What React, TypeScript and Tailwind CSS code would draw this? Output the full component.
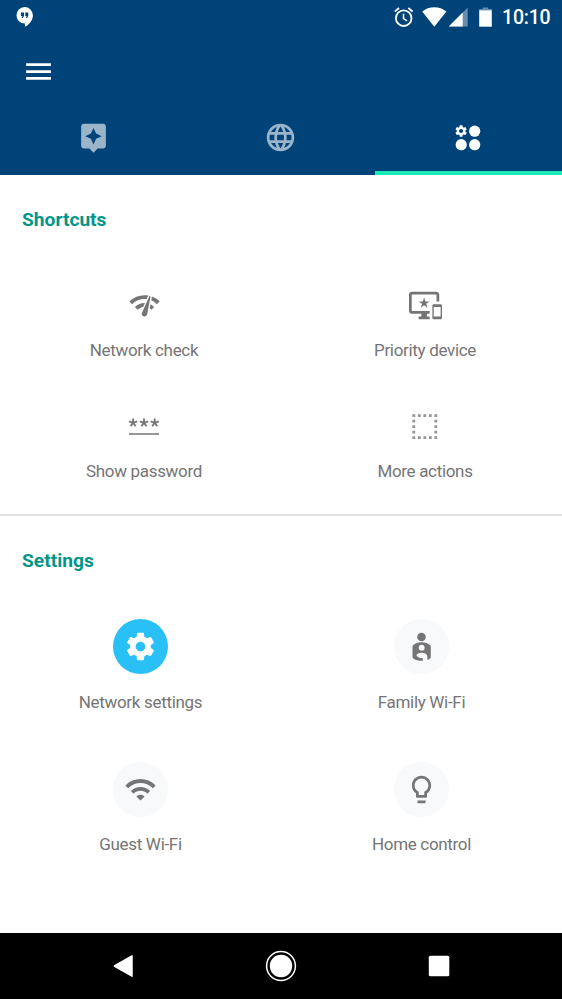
import type { ReactNode } from "react";

const GEAR =
  "M19.43 12.98c.04-.32.07-.64.07-.98s-.03-.66-.07-.98l2.11-1.65c.19-.15.24-.42.12-.64l-2-3.46c-.12-.22-.39-.3-.61-.22l-2.49 1c-.52-.4-1.08-.73-1.69-.98l-.38-2.65C14.46 2.18 14.25 2 14 2h-4c-.25 0-.46.18-.49.42l-.38 2.65c-.61.25-1.17.59-1.69.98l-2.49-1c-.23-.09-.49 0-.61.22l-2 3.46c-.13.22-.07.49.12.64l2.11 1.65c-.04.32-.07.65-.07.98s.03.66.07.98l-2.11 1.65c-.19.15-.24.42-.12.64l2 3.46c.12.22.39.3.61.22l2.49-1c.52.4 1.08.73 1.69.98l.38 2.65c.03.24.24.42.49.42h4c.25 0 .46-.18.49-.42l.38-2.65c.61-.25 1.17-.59 1.69-.98l2.49 1c.23.09.49 0 .61-.22l2-3.46c.12-.22.07-.49-.12-.64l-2.11-1.65zM12 15.5c-1.93 0-3.5-1.57-3.5-3.5s1.57-3.5 3.5-3.5 3.5 1.57 3.5 3.5-1.57 3.5-3.5 3.5z";
const MENU = "M3 18h18v-2H3v2zm0-5h18v-2H3v2zm0-7v2h18V6H3z";
const ASSISTANT =
  "M19 2H5c-1.11 0-2 .9-2 2v14c0 1.1.89 2 2 2h4l3 3 3-3h4c1.1 0 2-.9 2-2V4c0-1.1-.9-2-2-2zm-5.12 10.88L12 17l-1.88-4.12L6 11l4.12-1.88L12 5l1.88 4.12L18 11l-4.12 1.88z";
const GLOBE =
  "M11.99 2C6.47 2 2 6.48 2 12s4.47 10 9.99 10C17.52 22 22 17.52 22 12S17.52 2 11.99 2zm6.93 6h-2.95c-.32-1.25-.78-2.45-1.38-3.56 1.84.63 3.37 1.91 4.33 3.56zM12 4.04c.83 1.2 1.48 2.53 1.91 3.96h-3.82c.43-1.43 1.08-2.76 1.91-3.96zM4.26 14C4.1 13.36 4 12.69 4 12s.1-1.36.26-2h3.38c-.08.66-.14 1.32-.14 2 0 .68.06 1.34.14 2H4.26zm.82 2h2.95c.32 1.25.78 2.45 1.38 3.56-1.84-.63-3.37-1.9-4.33-3.56zm2.95-8H5.08c.96-1.66 2.49-2.93 4.33-3.56C8.81 5.55 8.35 6.75 8.03 8zM12 19.96c-.83-1.2-1.48-2.53-1.91-3.96h3.82c-.43 1.43-1.08 2.76-1.91 3.96zM14.34 14H9.66c-.09-.66-.16-1.32-.16-2 0-.68.07-1.35.16-2h4.68c.09.65.16 1.32.16 2 0 .68-.07 1.34-.16 2zm.25 5.56c.6-1.11 1.06-2.31 1.38-3.56h2.95c-.96 1.65-2.49 2.93-4.33 3.56zM16.36 14c.08-.66.14-1.32.14-2 0-.68-.06-1.34-.14-2h3.38c.16.64.26 1.31.26 2s-.1 1.36-.26 2h-3.38z";
const NETWORK_CHECK =
  "M15.9 5c-.17 0-.32.09-.41.23l-.07.15-5.18 11.65c-.16.29-.26.61-.26.96 0 1.11.9 2.01 2.01 2.01.96 0 1.77-.68 1.96-1.59l.01-.03L16.4 5.5c0-.28-.22-.5-.5-.5zM1 9l2 2c2.88-2.88 6.79-4.08 10.53-3.62l1.19-2.68C9.89 3.84 4.74 5.27 1 9zm20 2l2-2c-1.64-1.64-3.55-2.82-5.59-3.57l-.53 2.82c1.5.62 2.9 1.53 4.12 2.75zm-4 4l2-2c-.8-.8-1.7-1.42-2.66-1.89l-.55 2.92c.42.27.83.59 1.21.97zM5 13l2 2c1.13-1.13 2.56-1.79 4.03-2l1.28-2.88c-2.63-.08-5.3.87-7.31 2.88z";
const DEVICES =
  "M23 11.01L18 11c-.55 0-1 .45-1 1v9c0 .55.45 1 1 1h5c.55 0 1-.45 1-1v-9c0-.55-.45-.99-1-.99zM23 20h-5v-7h5v7zM20 2H2C.89 2 0 2.89 0 4v12c0 1.1.89 2 2 2h7v2H7v2h8v-2h-2v-2h2v-2H2V4h18v5h2V4c0-1.11-.9-2-2-2zm-8.03 7L11 6l-.97 3H7l2.47 1.76-.94 2.91 2.47-1.8 2.47 1.8-.94-2.91L15 9h-3.03z";
const WIFI =
  "M1 9l2 2c4.97-4.97 13.03-4.97 18 0l2-2C16.93 2.93 7.08 2.93 1 9zm8 8l3 3 3-3c-1.65-1.66-4.34-1.66-6 0zm-4-4l2 2c2.76-2.76 7.24-2.76 10 0l2-2C15.14 9.14 8.87 9.14 5 13z";
const BULB =
  "M9 21c0 .55.45 1 1 1h4c.55 0 1-.45 1-1v-1H9v1zm3-19C8.14 2 5 5.14 5 9c0 2.38 1.19 4.47 3 5.74V17c0 .55.45 1 1 1h6c.55 0 1-.45 1-1v-2.26c1.81-1.27 3-3.36 3-5.74 0-3.86-3.14-7-7-7zm2.85 11.1l-.85.6V16h-4v-2.3l-.85-.6C7.8 12.16 7 10.63 7 9c0-2.76 2.24-5 5-5s5 2.24 5 5c0 1.63-.8 3.16-2.15 4.1z";

function Icon({ d }: { d: string }) {
  return (
    <svg viewBox="0 0 24 24" className="size-[33px] shrink-0 fill-current">
      <path d={d} />
    </svg>
  );
}

function PasswordIcon() {
  const arms = [0, 72, 144, 216, 288];
  return (
    <svg viewBox="0 0 33 33" className="size-[33px] stroke-current" fill="none">
      {[5.1, 16, 26.7].map((x) =>
        arms.map((a) => (
          <line key={`${x}-${a}`} x1={x} y1={12.8} x2={x} y2={8.5} strokeWidth={1.9} transform={`rotate(${a} ${x} 12.8)`} />
        )),
      )}
      <line x1={1} x2={31} y1={24} y2={24} strokeWidth={1.5} />
    </svg>
  );
}

function DottedSquareIcon() {
  const steps = [0, 1, 2, 3, 4];
  return (
    <svg viewBox="0 0 33 33" className="size-[33px] fill-[#969696]">
      {steps.map((r) =>
        steps
          .filter((c) => r === 0 || r === 4 || c === 0 || c === 4)
          .map((c) => <rect key={`${r}-${c}`} x={3.4 + c * 5.5} y={4.2 + r * 5.5} width={2.8} height={2.8} />),
      )}
    </svg>
  );
}

function FamilyIcon() {
  return (
    <svg viewBox="0 0 33 33" className="size-[33px]">
      <circle cx="16.5" cy="7" r="4.3" fill="#757575" />
      <path
        fill="#757575"
        d="M16.5 12.2c3.7 0 6.8 1.2 8.7 3 .4.4.6.9.6 1.5v10.2c0 .9-.5 1.5-1.3 2l-2.3 1.2v-2.9c0-1.2-.7-2.2-2-2.2-2.3 0-2.4 1.8-4.4 1.8-1.8 0-3-.8-4.1-1.8 1.4 2.1 3.5 3.2 6.2 3.3v2.5c-4.2 0-8-.9-9.4-2.1-.7-.5-1-1.1-1-2V16.7c0-.6.2-1.1.6-1.5 1.9-1.8 4.7-3 8.4-3z"
      />
      <circle cx="16.7" cy="17.7" r="2.9" fill="#f8f9fb" />
      <path fill="#f8f9fb" d="M11.3 25.2c1-1.7 3-2.5 5.3-2.5 2.6 0 5.4 1 5.6 3.2v4.3h-4.3v-2.3c-2.8.3-5.1-.8-6.6-2.7z" />
    </svg>
  );
}

function StatusBar() {
  return (
    <div className="flex h-[34px] items-center justify-between pl-4 pr-[11px]">
      <svg viewBox="0 0 18 22" className="h-[22px] w-[18px]">
        <path fill="#fff" d="M8.6 1a8.3 8.3 0 0 1 8.3 8.2c0 5-3.8 9.6-8 11.6v-3.3A8.25 8.25 0 0 1 8.6 1z" />
        <path fill="#004378" d="M5 6.5h3v3.3L6.9 12H5.6l.8-2.1H5zM9.3 6.5h3v3.3L11.2 12H9.9l.8-2.1H9.3z" />
      </svg>
      <div className="flex items-center">
        <svg viewBox="0 0 20 22" className="h-[22px] w-5" fill="none" stroke="#fff">
          <circle cx="9.7" cy="12.2" r="7.8" strokeWidth="1.8" />
          <path d="M9.5 7.8v4.8l3.6 2.2" strokeWidth="1.5" />
          <path d="M.8 5.6 5 2M18.6 5.6 14.4 2" strokeWidth="1.9" />
        </svg>
        <svg viewBox="0 0 26 22" className="ml-[7px] h-[22px] w-[26px]">
          <path fill="#fff" d="M1.2 5.6a19 19 0 0 1 24.2 0L13.3 20.8z" />
        </svg>
        <svg viewBox="0 0 20 22" className="ml-px h-[22px] w-5">
          <path fill="#fff" fillOpacity=".4" d="M19.7 1.5v19H.8z" />
          <path fill="#fff" d="M14.7 6.5v14H.8z" />
        </svg>
        <svg viewBox="0 0 14 22" className="ml-[10px] h-[22px] w-[14px]">
          <path fill="#fff" fillOpacity=".4" d="M4.800 1.500h5.400V3h3.600v1.500H1.200V3h3.600z" />
          <path fill="#fff" d="M1.200 4.300h12.600v16.400H1.200z" />
        </svg>
        <span className="ml-[10px] w-[49px] whitespace-nowrap pt-0.5 text-[19.5px] font-medium leading-none tracking-[-0.2px] text-white">
          10:10
        </span>
      </div>
    </div>
  );
}

function Heading({ children }: { children: ReactNode }) {
  return <h2 className="pl-[22px] text-[19.2px] font-bold leading-6 text-[#009688]">{children}</h2>;
}

function Shortcut({ icon, label }: { icon: ReactNode; label: string }) {
  return (
    <button className="flex h-[120.5px] flex-col items-center pl-[7px] text-[#757575]">
      {icon}
      <span className="mt-[16px] text-[17px] leading-6 tracking-[-0.32px]">{label}</span>
    </button>
  );
}

function Setting({ icon, label, active = false }: { icon: ReactNode; label: string; active?: boolean }) {
  return (
    <button className="flex h-[142.5px] flex-col items-center text-[#757575]">
      <span
        className={`flex size-[55px] items-center justify-center rounded-full ${
          active ? "bg-[#29c0f5] text-white" : "bg-[#f8f9fb]"
        }`}
      >
        {icon}
      </span>
      <span className="mt-[15.5px] text-[17px] leading-6 tracking-[-0.32px]">{label}</span>
    </button>
  );
}

export default function App() {
  return (
    <div className="flex h-[999px] w-[562px] flex-col overflow-hidden bg-white font-['Roboto',sans-serif]">
      <header className="flex h-[175px] flex-col bg-[#004378] text-white">
        <StatusBar />
        <div className="flex h-[66px] items-start pl-[22px] pt-[21px]">
          <Icon d={MENU} />
        </div>
        <nav className="grid h-[75px] grid-cols-3">
          <button className="flex items-center justify-center text-[#9ab4ca]">
            <Icon d={ASSISTANT} />
          </button>
          <button className="flex items-center justify-center text-[#9ab4ca]">
            <Icon d={GLOBE} />
          </button>
          <button className="flex items-center justify-center border-b-4 border-[#1de9b6] pt-1">
            <svg viewBox="0 0 26 26" className="size-[26px] fill-white">
              <g transform="translate(-.8 -.8) scale(.575)">
                <path d={GEAR} />
              </g>
              <circle cx="19.7" cy="6.2" r="5.6" />
              <circle cx="6.2" cy="19.7" r="5.6" />
              <circle cx="19.7" cy="19.7" r="5.6" />
            </svg>
          </button>
        </nav>
      </header>

      <main className="flex flex-1 flex-col">
        <section className="h-[341px] border-b-2 border-[#e0e0e0] pt-[33px]">
          <Heading>Shortcuts</Heading>
          <div className="mt-[57px] grid grid-cols-2">
            <Shortcut icon={<Icon d={NETWORK_CHECK} />} label="Network check" />
            <Shortcut icon={<Icon d={DEVICES} />} label="Priority device" />
            <Shortcut icon={<PasswordIcon />} label="Show password" />
            <Shortcut icon={<DottedSquareIcon />} label="More actions" />
          </div>
        </section>
        <section className="pt-[33px]">
          <Heading>Settings</Heading>
          <div className="mt-[46px] grid grid-cols-2">
            <Setting active icon={<Icon d={GEAR} />} label="Network settings" />
            <Setting icon={<FamilyIcon />} label="Family Wi-Fi" />
            <Setting icon={<Icon d={WIFI} />} label="Guest Wi-Fi" />
            <Setting icon={<Icon d={BULB} />} label="Home control" />
          </div>
        </section>
      </main>

      <footer className="flex h-[66px] items-center justify-between bg-black px-[107px]">
        <svg viewBox="0 0 32 32" className="size-8 fill-white stroke-white">
          <path d="M7.3 16 25 5.8v20.4z" strokeWidth="1.5" strokeLinejoin="round" />
        </svg>
        <svg viewBox="0 0 32 32" className="size-8">
          <circle cx="16" cy="16" r="14.4" fill="none" stroke="#fff" strokeWidth="1.5" />
          <circle cx="16" cy="16" r="11.2" fill="#fff" />
        </svg>
        <svg viewBox="0 0 32 32" className="size-8 fill-white">
          <rect x="5.8" y="5.8" width="20.5" height="20.5" rx="1.5" />
        </svg>
      </footer>
    </div>
  );
}
